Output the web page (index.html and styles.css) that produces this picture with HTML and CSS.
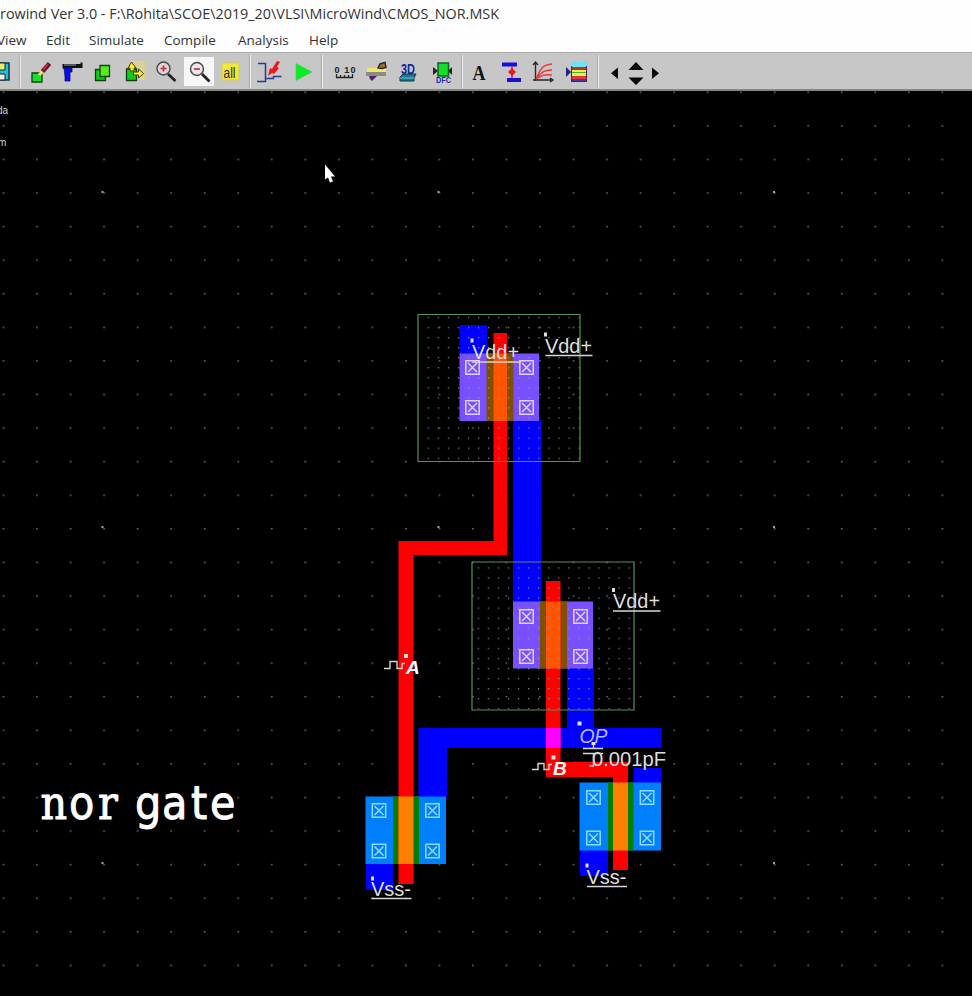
FILE: index.html
```html
<!DOCTYPE html>
<html lang="en">
<head>
<meta charset="utf-8">
<title>Microwind</title>
<link rel="stylesheet" href="styles.css">
</head>
<body>
<div class="app">
<header class="titlebar"><svg class="title" viewBox="0 0 972 28"><text x="0" y="19" textLength="499" lengthAdjust="spacingAndGlyphs">rowind Ver 3.0 - F:\Rohita\SCOE\2019_20\VLSI\MicroWind\CMOS_NOR.MSK</text></svg></header>
<nav class="menu"><span>View</span><span>Edit</span><span>Simulate</span><span>Compile</span><span>Analysis</span><span>Help</span></nav>
<div class="toolbar">
<svg class="tool" viewBox="0 0 32 37"><path d="M4 10h19v17H4z" fill="#19c5d4" stroke="#134" stroke-width="1.5"/><path d="M8 10h11v7H8z" fill="#e8ee70" stroke="#222"/><path d="M10 21h9v6h-9z" fill="#eee" stroke="#222"/></svg>
<i class="sep s1"></i>
<svg class="tool" viewBox="0 0 32 37"><path d="M8 20h10v9H8z" fill="#12e02c" stroke="#143c16" stroke-width="1.3"/><path d="M15 22l5-5" stroke="#f2e65a" stroke-width="3"/><path d="M18.500 18.500l7-8" stroke="#701626" stroke-width="4.500"/><path d="M19.500 16.500l4-5" stroke="#c43c3c" stroke-width="1.400"/></svg>
<svg class="tool" viewBox="0 0 32 37"><path d="M6.500 11h18v-1.500h2V15h-11l-1 3h-4l-4-3z" fill="#111"/><path d="M8 15h8v4h-2v9H9v-5z" fill="#0909ff" stroke="#101060" stroke-width=".8"/><path d="M8 12h12" stroke="#8ab" stroke-width="1"/></svg>
<svg class="tool" viewBox="0 0 32 37"><path d="M7.500 16.500h10v11h-10z" fill="#0bd00d" stroke="#103c10" stroke-width="1.300"/><path d="M12 12.500h9.500v11H12z" fill="#54ee1b" stroke="#223c10" stroke-width="1.300"/></svg>
<svg class="tool" viewBox="0 0 32 37"><path d="M12 8.500h12v18H12z" fill="#d8d29a" stroke="#e7df46"/><path d="M6.500 16h10v11.500h-10z" fill="#12cd18" stroke="#153c10" stroke-width="1.300"/><path d="M11.500 9l-3.500 6h2v3h4v-3h2z" fill="#ffef23" stroke="#443e10"/><path d="M23.500 20.500l-5-4.500v3h-5v3h5v3z" fill="#ffef23" stroke="#443e10"/></svg>
<svg class="tool" viewBox="0 0 32 37"><path d="M16 21l7.500 7" stroke="#222" stroke-width="2.800"/><circle cx="11.500" cy="15.500" r="6.500" fill="#ded5d5" stroke="#44474a" stroke-width="1.400"/><path d="M8.500 15.500h6M11.500 12.500v6" stroke="#d02b33" stroke-width="1.700"/></svg>
<svg class="tool" viewBox="0 0 32 37"><path d="M0 4h30v29H0z" fill="#f7f7f7"/><path d="M18 21l7.500 7.500" stroke="#222" stroke-width="2.800"/><circle cx="13" cy="16" r="6.500" fill="#eee6e7" stroke="#44474a" stroke-width="1.400"/><path d="M10 16h6" stroke="#b9364c" stroke-width="1.700"/></svg>
<svg class="tool" viewBox="0 0 32 37"><path d="M6 10h17v17H6z" fill="#f1e83d" stroke="#d5cb54"/><text x="7.500" y="25" class="all" textLength="12" lengthAdjust="spacingAndGlyphs">all</text></svg>
<i class="sep s2"></i>
<svg class="tool" viewBox="0 0 32 37"><path d="M4 10.500h7.500v18H3M11.500 25.500h8v-2h8" fill="none" stroke="#263b91" stroke-width="1.500"/><path d="M14 23l2-8 2 1 5-8 3 1-3 5 2 1-5 6-2-1z" fill="#e51a25"/></svg>
<svg class="tool" viewBox="0 0 32 37"><path d="M10 10.500v17l16-8.500z" fill="#0cec23" stroke="#49cc55" stroke-width=".6"/></svg>
<i class="sep s3"></i>
<svg class="tool" viewBox="0 0 32 37"><text x="5.500" y="20" class="ruler" textLength="21">0 10</text><path d="M7.500 21v3.500h16V21M11.500 24v-2M15.500 24v-2M19.500 24v-2" fill="none" stroke="#222" stroke-width="1.300"/></svg>
<svg class="tool" viewBox="0 0 32 37"><path d="M6 15h19v4H6z" fill="#f3e66b"/><path d="M5 19h20v4H5z" fill="#8a8b83"/><path d="M17 15l2-4 5-1.500 1 5-4 1z" fill="#a36d42" stroke="#302a25" stroke-width="1.500"/><path d="M8 23h8l-5 5-2-2z" fill="#5a2366"/></svg>
<svg class="tool" viewBox="0 0 32 37"><path d="M7 24l3-3h13l-2 4v3H7z" fill="#187a8b" stroke="#173545"/><path d="M7 25h14" stroke="#6bd" /><text x="8" y="20.500" class="three" textLength="14" lengthAdjust="spacingAndGlyphs">3D</text></svg>
<svg class="tool" viewBox="0 0 32 37"><path d="M8 14l5 4-5 4zM27 14l-4 4 4 4z" fill="#222"/><path d="M13 10h10.500v13H13z" fill="#12df2c" stroke="#145e1e" stroke-width="1.500"/><text x="11" y="30" class="drc" textLength="15" lengthAdjust="spacingAndGlyphs">DFC</text></svg>
<i class="sep s4"></i>
<svg class="tool" viewBox="0 0 32 37"><text x="9.500" y="27" class="letter" textLength="13" lengthAdjust="spacingAndGlyphs">A</text></svg>
<svg class="tool" viewBox="0 0 32 37"><path d="M7 9.500h15v4H7zM12 25h14v4H12z" fill="#1511d6"/><path d="M17 13.500V25" stroke="#e51b2b" stroke-width="1.600"/><path d="M17 15l4 4-4 4-4-4z" fill="#e51b2b"/></svg>
<svg class="tool" viewBox="0 0 32 37"><path d="M8.500 28V10M6 12l2.500-3 2.500 3M6 27h19M23 25l3 2-3 2" fill="none" stroke="#292929" stroke-width="1.400"/><path d="M9 26c4-7 4-14 16-15M9 26c5-5 6-9 16-9M9 26c5-3 8-5 16-4" fill="none" stroke="#e73838" stroke-width="1.400"/></svg>
<svg class="tool" viewBox="0 0 32 37"><path d="M7 14l5 5-5 5z" fill="#222078"/><path d="M12 9h16v5H12z" fill="#71e2ef"/><path d="M12 14h16v3H12z" fill="#b53142"/><path d="M12 17h16v6H12z" fill="#eeef42"/><path d="M12 19.500h16" stroke="#4caf39"/><path d="M12 23h16v3H12z" fill="#df3547"/><path d="M12 26h16v3H12z" fill="#3b3ba5"/><path d="M12.500 13v15.500h15V13" fill="none" stroke="#51243b"/></svg>
<i class="sep s5"></i>
<svg class="arrows" viewBox="599 53 72 37"><path d="M618 67.500v11.500l-7-5.700zM652 67.500v11.500l7-5.700zM628.500 70l7.500-8 7.500 8zM628.500 77.500l7.500 7.500 7.500-7.500z" fill="#080808"/></svg>
</div>
<main class="workspace">
<svg class="layout" viewBox="0 91 972 905">
<defs>
<pattern id="grid" x="2.600" y="91.500" width="33.530" height="33.580" patternUnits="userSpaceOnUse"><rect width="1.800" height="1.500" fill="#62625d"/></pattern>
<pattern id="fine" x="427.700" y="316.800" width="10.060" height="10.060" patternUnits="userSpaceOnUse"><rect width="1.200" height="1.300" fill="#999" fill-opacity=".85"/></pattern>
<pattern id="fine2" x="477.700" y="567.300" width="10.060" height="10.060" patternUnits="userSpaceOnUse"><rect width="1.200" height="1.300" fill="#999" fill-opacity=".85"/></pattern>
<g id="contact"><path d="M-6.700-6.700H6.700V6.700H-6.700zM-4.500-4.500L4.500 4.500M4.500-4.500L-4.500 4.500"/></g>
</defs>
<rect y="91" width="972" height="905" fill="#000"/>
<rect y="91" width="972" height="905" fill="url(#grid)"/>
<path class="major" d="M101.500 191h2v2h-2zM437.500 191h2v2h-2zM773 191h2v2h-2zM101.500 526h2v2h-2zM437.500 526h2v2h-2zM773 526h2v2h-2zM101.500 862h2v2h-2zM773 862h2v2h-2z"/>
<g class="metal"><path d="M459.500 325H487v29h-27.500zM513 420h28v182h-28zM567 668h27v61h-27zM418.500 728H661.500v20H447v49h-28.500zM366 864h27v26h-27zM580 850h28v26h-28zM633.500 768h28v15h-28z"/></g>
<path fill="#7850ff" d="M459.500 353.500H539v67.500h-79.500zM513 601.500h80v67h-80z"/>
<path fill="#805000" d="M486.500 353.500h27V421h-27zM540 601.500h27v67h-27z"/>
<path fill="#0080ff" d="M365.500 796.500H446V864h-80.500zM579.500 782.500H661v68h-81.500z"/>
<path fill="#008000" d="M393 796.500h26V864h-26zM608 782.500h25.500v68H608z"/>
<path class="poly" d="M493.500 333H507v222h-93.500v329h-15V541h95zM546 581h14.500v181H628v108h-15v-93h-67z"/>
<path fill="#ff5500" d="M493.500 353.500H507V421h-13.500zM546 601.500h14.500v67H546z"/>
<path fill="#ff8000" d="M398.500 796.500h15V864h-15zM613 782.500h15v68h-15z"/>
<path fill="#f0f" d="M546 728h14.500v20H546z"/>
<rect x="419" y="315" width="161" height="147" fill="url(#fine)"/><rect x="473" y="562" width="161" height="147" fill="url(#fine2)"/>
<path class="well" d="M418 314.500h162v147H418zM472 562h162v148H472z"/>
<g class="contacts"><use href="#contact" x="472.500" y="367.500"/><use href="#contact" x="526.500" y="367.500"/><use href="#contact" x="472.500" y="407.500"/><use href="#contact" x="526.500" y="407.500"/><use href="#contact" x="526.500" y="616.500"/><use href="#contact" x="580.500" y="616.500"/><use href="#contact" x="526.500" y="656.500"/><use href="#contact" x="580.500" y="656.500"/></g>
<g class="contacts cyan"><use href="#contact" x="379" y="810.500"/><use href="#contact" x="432.500" y="810.500"/><use href="#contact" x="379" y="851"/><use href="#contact" x="432.500" y="851"/><use href="#contact" x="593.500" y="797.500"/><use href="#contact" x="647" y="797.500"/><use href="#contact" x="593.500" y="838"/><use href="#contact" x="647" y="838"/></g>
<g class="label"><text x="472" y="358.500" textLength="47" lengthAdjust="spacingAndGlyphs">Vdd+</text><text x="545" y="352.500" textLength="47" lengthAdjust="spacingAndGlyphs">Vdd+</text><text x="613" y="607.500" textLength="47" lengthAdjust="spacingAndGlyphs">Vdd+</text><text x="371" y="895.500" textLength="40" lengthAdjust="spacingAndGlyphs">Vss-</text><text x="586.500" y="883.500" textLength="40" lengthAdjust="spacingAndGlyphs">Vss-</text><text x="592" y="765.500" textLength="74" lengthAdjust="spacingAndGlyphs">0.001pF</text><text class="italic" x="579.500" y="742.500" textLength="28" lengthAdjust="spacingAndGlyphs">OP</text><text class="bold" x="406" y="673.500">A</text><text class="bold" x="553" y="775">B</text></g>
<path class="lines" d="M472 362h49M545.500 355.500h47M613 611h47.500M371.500 898.500h40M587 886.500h40M384 668.500h6v-7h7v7h5v-5h3M532 769.500h6v-6h6v6h5v-5h3M583 748.500h20M583 753.500h20M593.500 743v5M593.500 754v12h-4"/>
<path class="points" d="M470.500 338.500h3v4h-3zM544 332.500h3v4h-3zM612 588h3v4h-3zM577.500 721.500h4v4h-4zM404 654h4v4h-4zM551.500 755.500h4v4h-4zM585.500 863.500h3v4h-3zM371 876.500h3v4h-3zM591.500 742h4v3h-4z"/>
<text class="tiny" x="-3" y="114">da</text><text class="tiny" x="-2" y="146">m</text>
<path fill="#fff" d="M325 164.500v15l3-2 2 5 3-1-2-5h4z"/>
<text class="caption" y="819"><tspan class="slab" x="40.500">n</tspan><tspan x="69">o</tspan><tspan class="slab" x="98">r</tspan> <tspan x="135">g</tspan><tspan x="162">a</tspan><tspan x="191">t</tspan><tspan x="210">e</tspan></text>
</svg>
</main>
</div>
</body>
</html>
```
FILE: styles.css
```css
* { box-sizing: border-box; }
body { margin: 0; background: #000; overflow: hidden; }
.app { width: 972px; height: 996px; display: flex; flex-direction: column; overflow: hidden; font-family: "Open Sans", "Noto Sans", sans-serif; }
.titlebar { height: 28px; flex: none; background: #fefefe; }
.title { display: block; width: 972px; height: 28px; font-size: 15px; fill: #333; }
.menu { height: 24px; flex: none; display: flex; align-items: center; background: #fefefe; color: #333; font-size: 13.5px; line-height: 24px; }
.menu span { flex: none; width: 75px; }
.menu span:nth-child(1) { width: 49px; margin-left: -3px; }
.menu span:nth-child(2) { width: 43px; }
.menu span:nth-child(4) { width: 74px; }
.menu span:nth-child(5) { width: 71px; }
.toolbar { height: 39px; flex: none; display: flex; background: #c7c7c7; border-top: 1px solid #aaa; border-bottom: 2px solid #858782; }
.tool { flex: none; width: 32px; height: 37px; margin-bottom: -1px; }
.tool:first-child { margin-left: -14px; }
.arrows { flex: none; width: 72px; height: 37px; }
.sep { flex: none; height: 33px; margin-top: 2px; width: 6px; background: linear-gradient(90deg, transparent 1px, #aaa 1px 2px, #eee 2px 3px, transparent 3px); }
.s3 { width: 11px; background-position: 2px 0; }
.s4 { background-position: 3px 0; }
.s5 { width: 8px; background-position: 5px 0; }
.all { font: 14px "Liberation Sans", sans-serif; fill: #292713; }
.ruler { font: bold 9px "Liberation Sans", sans-serif; fill: #222; }
.three { font: bold 15px "Liberation Sans", sans-serif; fill: #17279b; }
.drc { font: bold 9px "Liberation Sans", sans-serif; fill: #2028b5; }
.letter { font: bold 21px "Liberation Serif", serif; fill: #111; }
.workspace, .layout { display: block; width: 972px; height: 905px; }
.metal { fill: #00f; }
.poly { fill: #f00; }
.major { fill: #a5a598; }
.well { fill: none; stroke: #579257; stroke-width: 1.2; }
.contacts { fill: none; stroke: #ded4ff; stroke-width: 1.5; }
.cyan { stroke: #90dcff; }
.label { font: 20px "Liberation Sans", sans-serif; fill: #dedede; }
.italic { font-style: italic; fill: #b9b9ff; }
.bold { font-size: 19px; font-style: italic; font-weight: bold; fill: #fff; }
.lines { fill: none; stroke: #d5d5d5; stroke-width: 1.4; }
.points { fill: #dedede; }
.tiny { font: 10px "Liberation Sans", sans-serif; fill: #d5d5d5; }
.caption { font: 46px "DejaVu Sans Condensed", "DejaVu Sans", sans-serif; font-stretch: condensed; fill: #fff; stroke: #fff; stroke-width: .9; stroke-linejoin: round; }
.slab { font-family: "DejaVu Serif Condensed", "DejaVu Serif", serif; }
```
